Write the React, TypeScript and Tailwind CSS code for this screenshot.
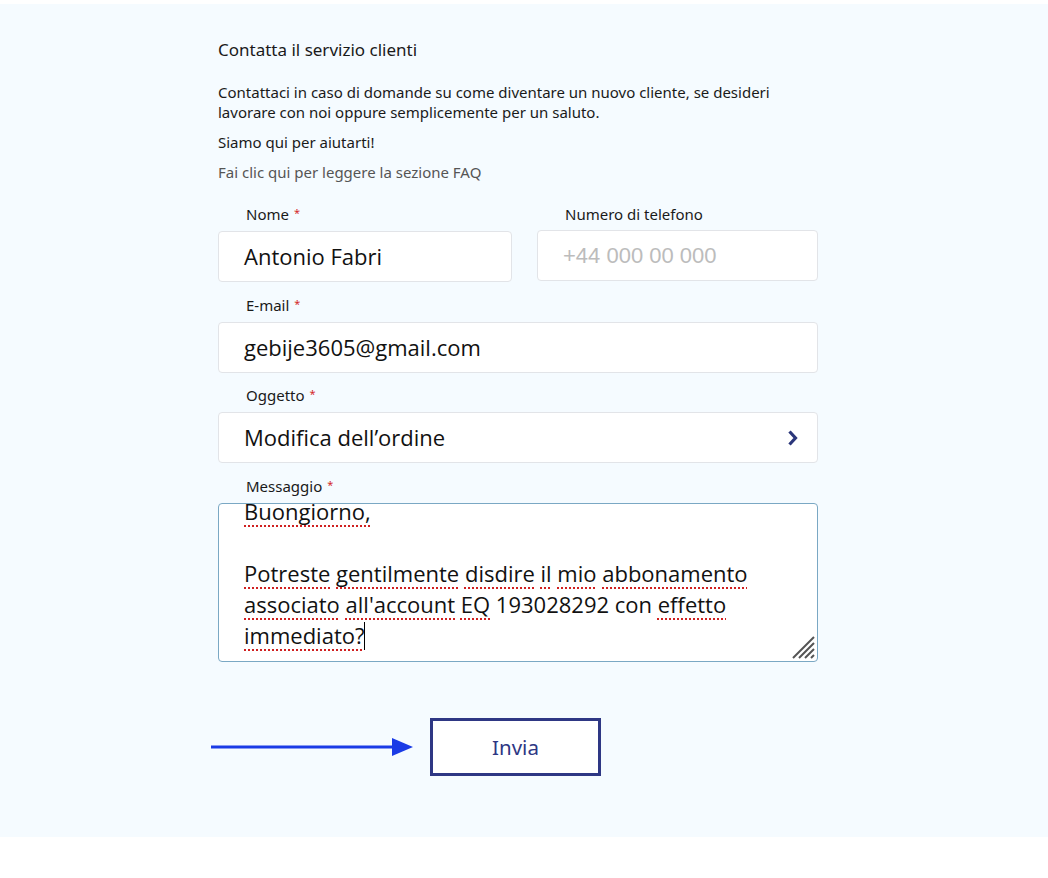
import React from 'react'

function Label({ text, required }: { text: string; required?: boolean }) {
  return (
    <div className="pl-7 h-[17px] flex items-center text-[15px] leading-none text-[#1a1a1a]">
      {text}
      {required && <span className="ml-[5px] text-[11px] text-[#d42a2a] -mt-1">*</span>}
    </div>
  )
}

function Sp({ children }: { children: React.ReactNode }) {
  return <span className="underline decoration-dotted decoration-[#d02020] decoration-[1.5px] underline-offset-[5px]">{children}</span>
}

export default function App() {
  return (
    <div className="min-h-[878px] bg-white pt-1 font-['Noto_Sans']">
      <div className="bg-[#f5fbff] h-[833px]">
        <div className="w-[600px] ml-[218px] pt-[35px]">
          <h1 className="text-[17px] leading-[22px] text-[#1a1a1a]">Contatta il servizio clienti</h1>
          <p className="mt-[21px] max-w-[575px] text-[15px] leading-[20px] text-[#1a1a1a]">
            Contattaci in caso di domande su come diventare un nuovo cliente, se desideri lavorare con noi oppure semplicemente per un saluto.
          </p>
          <p className="mt-[10px] text-[15px] leading-[20px] text-[#1a1a1a]">Siamo qui per aiutarti!</p>
          <p className="mt-[10px] text-[15px] leading-[20px] text-[#555]">Fai clic qui per leggere la sezione FAQ</p>

          <div className="mt-[24px] flex gap-[25px]">
            <div className="w-[294px]">
              <Label text="Nome" required />
              <div className="mt-[8px] h-[51px] rounded bg-white border border-[#e2e4e8] flex items-center pl-[25px] text-[22px] text-[#111] font-['Open_Sans']">
                Antonio Fabri
              </div>
            </div>
            <div className="flex-1">
              <Label text="Numero di telefono" />
              <div className="mt-[8px] -translate-y-px h-[51px] rounded bg-white border border-[#e2e4e8] flex items-center pl-[25px] text-[22px] text-[#bcbcbc] font-['Liberation_Sans']">
                +44 000 00 000
              </div>
            </div>
          </div>

          <div className="mt-[15px]">
            <Label text="E-mail" required />
            <div className="mt-[8px] h-[51px] rounded bg-white border border-[#e2e4e8] flex items-center pl-[25px] text-[22px] text-[#111] font-['Open_Sans']">
              gebije3605@gmail.com
            </div>
          </div>

          <div className="mt-[14px]">
            <Label text="Oggetto" required />
            <div className="mt-[8px] h-[51px] rounded bg-white border border-[#e2e4e8] flex items-center justify-between pl-[25px] pr-[18px] text-[22px] text-[#111] font-['Open_Sans']">
              Modifica dell’ordine
              <svg width="12" height="18" viewBox="0 0 12 18" fill="none">
                <path d="M2.5 2.5 L8.5 9 L2.5 15.5" stroke="#2b367a" strokeWidth="3.2" strokeLinejoin="miter" />
              </svg>
            </div>
          </div>

          <div className="mt-[15px]">
            <Label text="Messaggio" required />
            <div className="relative mt-[8px] h-[159px] overflow-hidden rounded bg-white border border-[#7aa8c4] pl-[25px] pr-4 font-['Open_Sans'] text-[22px] leading-[31px] text-[#111]">
              <div className="-mt-[8px] whitespace-pre-wrap">
                <Sp>Buongiorno,</Sp>
                {'\n\n'}
                <Sp>Potreste</Sp> <Sp>gentilmente</Sp> <Sp>disdire</Sp> <Sp>il</Sp> <Sp>mio</Sp> <Sp>abbonamento</Sp>
                {'\n'}
                <Sp>associato</Sp> <Sp>all'account</Sp> <Sp>EQ</Sp> 193028292 con <Sp>effetto</Sp>
                {'\n'}
                <Sp>immediato?</Sp>
                <span className="inline-block w-px h-[28px] bg-black align-middle -mt-1" />
              </div>
              <svg className="absolute right-[2px] bottom-[2px]" width="26" height="26" viewBox="0 0 26 26">
                <path d="M25 4 L4 25 M25 10 L10 25 M25 16 L16 25 M25 22 L22 25" stroke="#555" strokeWidth="2" />
              </svg>
            </div>
          </div>
        </div>

        <div className="mt-[56px] ml-[211px] flex items-center gap-[17px]">
          <svg width="202" height="20" viewBox="0 0 202 20">
            <path d="M0 10 H184" stroke="#1a3be6" strokeWidth="3" />
            <path d="M181 1 L202 10 L181 19 Z" fill="#1a3be6" />
          </svg>
          <button
            type="button"
            className="w-[171px] h-[58px] border-[3px] border-[#2e3784] bg-white text-[#2e3784] text-[20.5px] font-['Noto_Sans']"
          >
            Invia
          </button>
        </div>
      </div>
    </div>
  )
}
